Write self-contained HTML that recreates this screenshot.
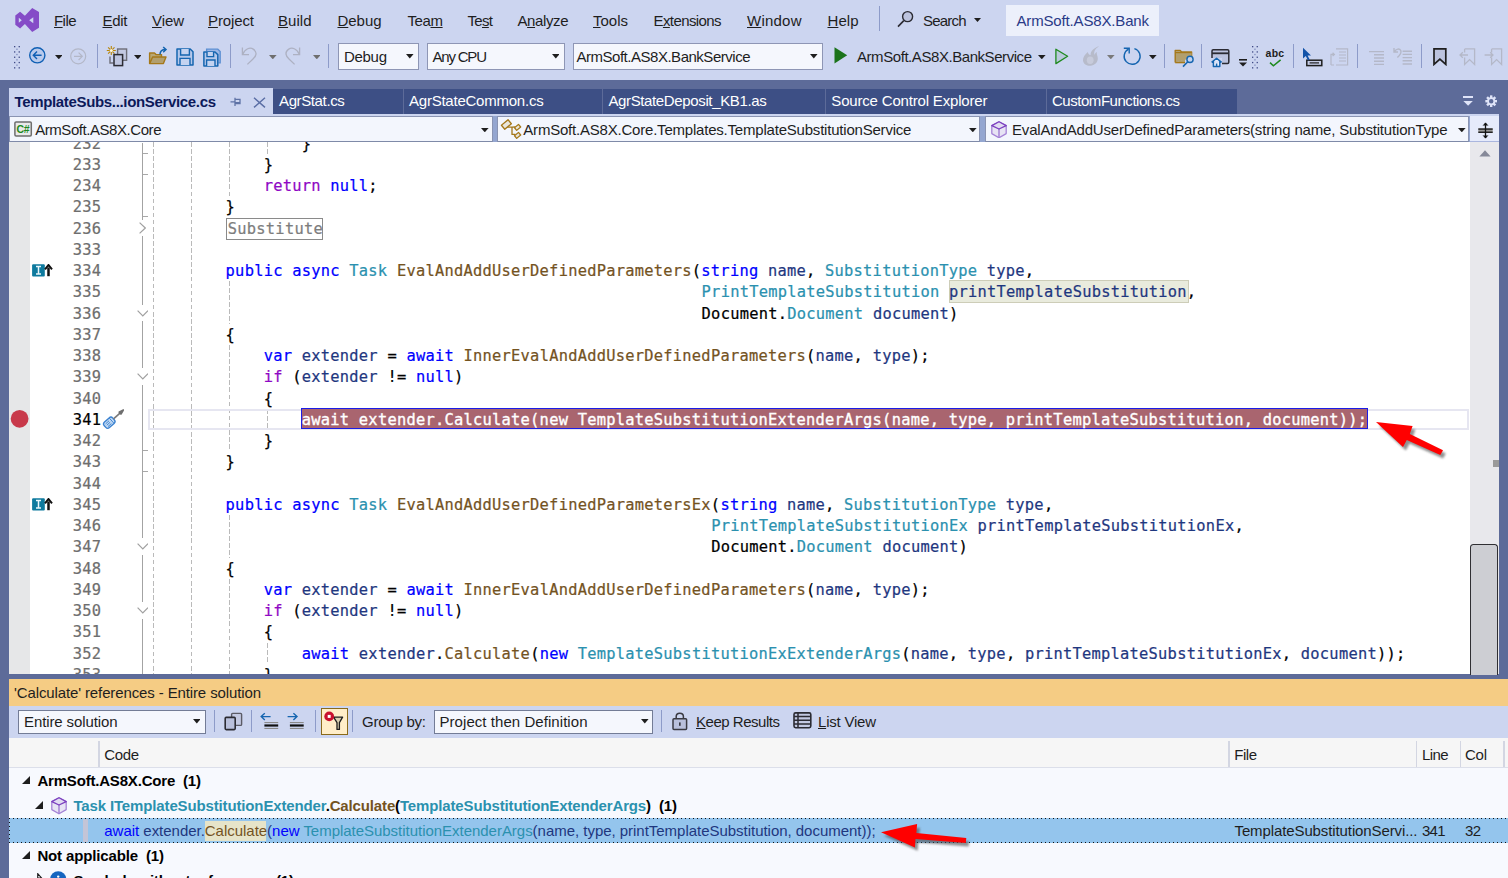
<!DOCTYPE html>
<html lang="en"><head><meta charset="utf-8"><title>Visual Studio</title>
<style>
html,body{margin:0;padding:0}
body{width:1508px;height:878px;overflow:hidden;background:#5d6b99;position:relative;font-family:"Liberation Sans", sans-serif}
body div,body svg{position:absolute}
.t{white-space:pre;line-height:20px;height:20px}
.t u{text-decoration-thickness:1px;text-underline-offset:0.7px}
.c{white-space:pre;font-family:"DejaVu Sans Mono", "Liberation Mono", monospace;font-size:15.4px;letter-spacing:0.248px;line-height:21px;height:21px;color:#000;-webkit-text-stroke:0.22px}
.c span{position:static}
.k{color:#0000ff}.ty{color:#2b91af}.m{color:#74531f}.p{color:#1f377f}.ck{color:#8f08c4}
.ln{color:#6e6e6e;text-align:right}
</style></head>
<body>
<div style="left:0px;top:0px;width:1508px;height:80px;background:#ccd5f0;"></div>
<div class="t" style="left:54px;top:10.70px;font-size:15px;font-weight:400;color:#1e1e1e;letter-spacing:-0.557px"><u>F</u>ile</div>
<div class="t" style="left:102.5px;top:10.70px;font-size:15px;font-weight:400;color:#1e1e1e;letter-spacing:-0.286px"><u>E</u>dit</div>
<div class="t" style="left:152px;top:10.70px;font-size:15px;font-weight:400;color:#1e1e1e;letter-spacing:-0.083px"><u>V</u>iew</div>
<div class="t" style="left:208px;top:10.70px;font-size:15px;font-weight:400;color:#1e1e1e;letter-spacing:-0.115px"><u>P</u>roject</div>
<div class="t" style="left:278px;top:10.70px;font-size:15px;font-weight:400;color:#1e1e1e;letter-spacing:0.035px"><u>B</u>uild</div>
<div class="t" style="left:337.5px;top:10.70px;font-size:15px;font-weight:400;color:#1e1e1e;letter-spacing:-0.051px"><u>D</u>ebug</div>
<div class="t" style="left:407.5px;top:10.70px;font-size:15px;font-weight:400;color:#1e1e1e;letter-spacing:-0.396px">Tea<u>m</u></div>
<div class="t" style="left:467.5px;top:10.70px;font-size:15px;font-weight:400;color:#1e1e1e;letter-spacing:-0.672px">Te<u>s</u>t</div>
<div class="t" style="left:517.5px;top:10.70px;font-size:15px;font-weight:400;color:#1e1e1e;letter-spacing:-0.396px">A<u>n</u>alyze</div>
<div class="t" style="left:593px;top:10.70px;font-size:15px;font-weight:400;color:#1e1e1e;letter-spacing:-0.008px"><u>T</u>ools</div>
<div class="t" style="left:653.5px;top:10.70px;font-size:15px;font-weight:400;color:#1e1e1e;letter-spacing:-0.597px">E<u>x</u>tensions</div>
<div class="t" style="left:747px;top:10.70px;font-size:15px;font-weight:400;color:#1e1e1e;letter-spacing:0.228px"><u>W</u>indow</div>
<div class="t" style="left:827.5px;top:10.70px;font-size:15px;font-weight:400;color:#1e1e1e;letter-spacing:0.047px"><u>H</u>elp</div>
<div style="left:879px;top:6px;width:1.2px;height:25px;background:#8d9bc9;"></div>
<div class="t" style="left:923px;top:10.70px;font-size:15px;font-weight:400;color:#1e1e1e;letter-spacing:-0.806px">Search</div>
<div style="left:1006px;top:5px;width:153px;height:31px;background:#ecf0fb;"></div>
<div class="t" style="left:1016.5px;top:11.20px;font-size:15px;font-weight:400;color:#2a3a87;letter-spacing:-0.16px">ArmSoft.AS8X.Bank</div>
<div style="left:338px;top:43px;width:79px;height:25px;background:#f5f7fd;border:1px solid #8e96b5"></div>
<div class="t" style="left:344px;top:46.50px;font-size:15px;font-weight:400;color:#1e1e1e;letter-spacing:-0.301px">Debug</div>
<svg style="left:406px;top:54.2px;" width="7.6" height="4.4" viewBox="0 0 7.6 4.4"><path d="M0 0H7.6L3.8 4.4Z" fill="#1e1e1e"/></svg>
<div style="left:427px;top:43px;width:136px;height:25px;background:#f5f7fd;border:1px solid #8e96b5"></div>
<div class="t" style="left:432.5px;top:46.50px;font-size:15px;font-weight:400;color:#1e1e1e;letter-spacing:-1.198px">Any CPU</div>
<svg style="left:551.5px;top:54.2px;" width="7.6" height="4.4" viewBox="0 0 7.6 4.4"><path d="M0 0H7.6L3.8 4.4Z" fill="#1e1e1e"/></svg>
<div style="left:573px;top:43px;width:248px;height:25px;background:#f5f7fd;border:1px solid #8e96b5"></div>
<div class="t" style="left:576.5px;top:46.50px;font-size:15px;font-weight:400;color:#1e1e1e;letter-spacing:-0.482px">ArmSoft.AS8X.BankService</div>
<svg style="left:810px;top:54.2px;" width="7.6" height="4.4" viewBox="0 0 7.6 4.4"><path d="M0 0H7.6L3.8 4.4Z" fill="#1e1e1e"/></svg>
<div class="t" style="left:857px;top:46.50px;font-size:15px;font-weight:400;color:#1e1e1e;letter-spacing:-0.438px">ArmSoft.AS8X.BankService</div>
<div style="left:9px;top:88px;width:264.1px;height:28px;background:#ccd5f0;"></div>
<div class="t" style="left:14.5px;top:91.80px;font-size:15px;font-weight:700;color:#0c1a5a;letter-spacing:-0.339px">TemplateSubs...ionService.cs</div>
<div style="left:273px;top:89px;width:129.5px;height:24.8px;background:#3d4f85;"></div>
<div class="t" style="left:279px;top:91.40px;font-size:15px;font-weight:400;color:#ffffff;letter-spacing:-0.378px">AgrStat.cs</div>
<div style="left:404px;top:89px;width:197.5px;height:24.8px;background:#3d4f85;"></div>
<div class="t" style="left:409px;top:91.40px;font-size:15px;font-weight:400;color:#ffffff;letter-spacing:-0.231px">AgrStateCommon.cs</div>
<div style="left:603px;top:89px;width:221.5px;height:24.8px;background:#3d4f85;"></div>
<div class="t" style="left:608.4px;top:91.40px;font-size:15px;font-weight:400;color:#ffffff;letter-spacing:-0.364px">AgrStateDeposit_KB1.as</div>
<div style="left:826px;top:89px;width:219.5px;height:24.8px;background:#3d4f85;"></div>
<div class="t" style="left:831.3px;top:91.40px;font-size:15px;font-weight:400;color:#ffffff;letter-spacing:-0.176px">Source Control Explorer</div>
<div style="left:1047px;top:89px;width:190px;height:24.8px;background:#3d4f85;"></div>
<div class="t" style="left:1052px;top:91.40px;font-size:15px;font-weight:400;color:#ffffff;letter-spacing:-0.464px">CustomFunctions.cs</div>
<div style="left:9px;top:113.8px;width:1490px;height:2.8px;background:#ccd5f0;"></div>
<div style="left:9px;top:116.4px;width:1490px;height:26px;background:#94a6d0;"></div>
<div style="left:9.3px;top:116.4px;width:481.3px;height:24px;background:#f3f6fd;border:1px solid #8a94b2;border-bottom-color:#7f8aa8"></div>
<div class="t" style="left:35.2px;top:119.70px;font-size:15px;font-weight:400;color:#1e1e1e;letter-spacing:-0.443px">ArmSoft.AS8X.Core</div>
<svg style="left:481px;top:127.60000000000001px;" width="7.6" height="4.3" viewBox="0 0 7.6 4.3"><path d="M0 0H7.6L3.8 4.3Z" fill="#1e1e1e"/></svg>
<div style="left:497.4px;top:116.4px;width:481px;height:24px;background:#f3f6fd;border:1px solid #8a94b2;border-bottom-color:#7f8aa8"></div>
<div class="t" style="left:523.3px;top:119.70px;font-size:15px;font-weight:400;color:#1e1e1e;letter-spacing:-0.207px">ArmSoft.AS8X.Core.Templates.TemplateSubstitutionService</div>
<svg style="left:969.2px;top:127.60000000000001px;" width="7.6" height="4.3" viewBox="0 0 7.6 4.3"><path d="M0 0H7.6L3.8 4.3Z" fill="#1e1e1e"/></svg>
<div style="left:985.2px;top:116.4px;width:482.3px;height:24px;background:#f3f6fd;border:1px solid #8a94b2;border-bottom-color:#7f8aa8"></div>
<div class="t" style="left:1012px;top:119.70px;font-size:15px;font-weight:400;color:#1e1e1e;letter-spacing:-0.176px">EvalAndAddUserDefinedParameters(string name, SubstitutionType</div>
<svg style="left:1458px;top:127.60000000000001px;" width="7.6" height="4.3" viewBox="0 0 7.6 4.3"><path d="M0 0H7.6L3.8 4.3Z" fill="#1e1e1e"/></svg>
<div style="left:1469.5px;top:116.4px;width:29.5px;height:25.6px;background:#e6ebfb;border-bottom:1px solid #aab6de;box-sizing:content-box;height:25px"></div>
<div style="left:9px;top:142px;width:1490px;height:532px;background:#ffffff;"></div>
<div style="left:9px;top:142px;width:21px;height:532px;background:#e6e7e8;"></div>
<div style="left:1470px;top:142px;width:29px;height:532px;background:#e8e8ec;"></div>
<div style="left:1470px;top:543.5px;width:26px;height:130.5px;background:#cdced3;border:1.5px solid #2f2f33;border-bottom:none;border-radius:3.5px 3.5px 0 0"></div>
<div style="left:1493px;top:460px;width:6px;height:7px;background:#9a9a9a;"></div>
<svg style="left:1478.6px;top:149.8px;" width="12" height="7" viewBox="0 0 12 7"><path d="M6 0.3L11.6 6.4H0.4Z" fill="#868999"/></svg>
<div style="left:141.5px;top:142.5px;width:1.5px;height:77.19999999999999px;background:#a3a3a3;"></div>
<svg style="left:138.6px;top:222.0px;" width="7.4" height="12" viewBox="0 0 7.4 12"><path d="M0.6 0.6L6.3 6L0.6 11.4" fill="none" stroke="#a0a0a0" stroke-width="1.2"/></svg>
<div style="left:141.5px;top:236.1px;width:1.5px;height:68.6px;background:#a3a3a3;"></div>
<svg style="left:136.6px;top:309.6px;" width="11.6" height="7" viewBox="0 0 11.6 7"><path d="M0.6 0.6L5.8 5.9L11 0.6" fill="none" stroke="#a0a0a0" stroke-width="1.2"/></svg>
<div style="left:141.5px;top:321.1px;width:1.5px;height:47.349999999999966px;background:#a3a3a3;"></div>
<svg style="left:136.6px;top:373.35px;" width="11.6" height="7" viewBox="0 0 11.6 7"><path d="M0.6 0.6L5.8 5.9L11 0.6" fill="none" stroke="#a0a0a0" stroke-width="1.2"/></svg>
<div style="left:141.5px;top:384.85px;width:1.5px;height:153.60000000000002px;background:#a3a3a3;"></div>
<svg style="left:136.6px;top:543.35px;" width="11.6" height="7" viewBox="0 0 11.6 7"><path d="M0.6 0.6L5.8 5.9L11 0.6" fill="none" stroke="#a0a0a0" stroke-width="1.2"/></svg>
<div style="left:141.5px;top:554.85px;width:1.5px;height:47.35000000000002px;background:#a3a3a3;"></div>
<svg style="left:136.6px;top:607.1px;" width="11.6" height="7" viewBox="0 0 11.6 7"><path d="M0.6 0.6L5.8 5.9L11 0.6" fill="none" stroke="#a0a0a0" stroke-width="1.2"/></svg>
<div style="left:141.5px;top:618.6px;width:1.5px;height:55.39999999999998px;background:#a3a3a3;"></div>
<div style="left:143px;top:152.65px;width:4.8px;height:1px;background:#a8a8a8;"></div>
<div style="left:143px;top:173.9px;width:4.8px;height:1px;background:#a8a8a8;"></div>
<div style="left:143px;top:216.4px;width:4.8px;height:1px;background:#a8a8a8;"></div>
<div style="left:143px;top:450.15px;width:4.8px;height:1px;background:#a8a8a8;"></div>
<div style="left:143px;top:471.4px;width:4.8px;height:1px;background:#a8a8a8;"></div>
<div style="left:9px;top:142px;width:1461px;height:532px;overflow:hidden">
<div style="left:143.8px;top:0.0px;width:1px;height:532.0px;background:repeating-linear-gradient(180deg,#bababa 0 4.6px,transparent 4.6px 7.08px)"></div>
<div style="left:181.8px;top:0.0px;width:1px;height:532.0px;background:repeating-linear-gradient(180deg,#bababa 0 4.6px,transparent 4.6px 7.08px)"></div>
<div style="left:219.9px;top:0.0px;width:1px;height:54.3px;background:repeating-linear-gradient(180deg,#bababa 0 4.6px,transparent 4.6px 7.08px)"></div>
<div style="left:258.0px;top:0.0px;width:1px;height:11.8px;background:repeating-linear-gradient(180deg,#bababa 0 4.6px,transparent 4.6px 7.08px)"></div>
<div style="left:219.9px;top:139.3px;width:1px;height:42.5px;background:repeating-linear-gradient(180deg,#bababa 0 4.6px,transparent 4.6px 7.08px)"></div>
<div style="left:219.9px;top:203.1px;width:1px;height:106.2px;background:repeating-linear-gradient(180deg,#bababa 0 4.6px,transparent 4.6px 7.08px)"></div>
<div style="left:258.0px;top:266.8px;width:1px;height:21.2px;background:repeating-linear-gradient(180deg,#bababa 0 4.6px,transparent 4.6px 7.08px)"></div>
<div style="left:219.9px;top:373.0px;width:1px;height:42.5px;background:repeating-linear-gradient(180deg,#bababa 0 4.6px,transparent 4.6px 7.08px)"></div>
<div style="left:219.9px;top:436.8px;width:1px;height:95.2px;background:repeating-linear-gradient(180deg,#bababa 0 4.6px,transparent 4.6px 7.08px)"></div>
<div style="left:258.0px;top:500.5px;width:1px;height:21.2px;background:repeating-linear-gradient(180deg,#bababa 0 4.6px,transparent 4.6px 7.08px)"></div>
<div style="left:139.2px;top:266.8px;width:1317px;height:16.8px;border:2px solid #e6e6f1"></div>
<div style="left:292px;top:266.1px;width:1064.9px;height:19.2px;background:#a9656f;border:1.5px solid #1c1ce6"></div>
<div style="left:940px;top:138px;width:238px;height:21px;background:#e9ebdd;border:1px solid #cdcdb8"></div>
<div style="left:217.3px;top:76.4px;width:94.5px;height:19.6px;border:1px solid #8a8a8a"></div>
<div class="c ln" style="left:51px;top:-8.00px;width:41.3px;color:#6e6e6e">232</div>
<div class="c" style="left:292.77px;top:-8.00px">}</div>
<div class="c ln" style="left:51px;top:13.00px;width:41.3px;color:#6e6e6e">233</div>
<div class="c" style="left:254.69px;top:13.00px">}</div>
<div class="c ln" style="left:51px;top:34.00px;width:41.3px;color:#6e6e6e">234</div>
<div class="c" style="left:254.69px;top:34.00px"><span class="ck">return</span> <span class="k">null</span>;</div>
<div class="c ln" style="left:51px;top:55.00px;width:41.3px;color:#6e6e6e">235</div>
<div class="c" style="left:216.61px;top:55.00px">}</div>
<div class="c ln" style="left:51px;top:77.00px;width:41.3px;color:#6e6e6e">236</div>
<div class="c" style="left:218.81px;top:77.00px;color:#7d7d7d">Substitute</div>
<div class="c ln" style="left:51px;top:98.00px;width:41.3px;color:#6e6e6e">333</div>
<div class="c ln" style="left:51px;top:119.00px;width:41.3px;color:#6e6e6e">334</div>
<div class="c" style="left:216.61px;top:119.00px"><span class="k">public</span> <span class="k">async</span> <span class="ty">Task</span> <span class="m">EvalAndAddUserDefinedParameters</span>(<span class="k">string</span> <span class="p">name</span>, <span class="ty">SubstitutionType</span> <span class="p">type</span>,</div>
<div class="c ln" style="left:51px;top:140.00px;width:41.3px;color:#6e6e6e">335</div>
<div class="c" style="left:692.61px;top:140.00px"><span class="ty">PrintTemplateSubstitution</span> <span class="p">printTemplateSubstitution</span>,</div>
<div class="c ln" style="left:51px;top:162.00px;width:41.3px;color:#6e6e6e">336</div>
<div class="c" style="left:692.61px;top:162.00px">Document.<span class="ty">Document</span> <span class="p">document</span>)</div>
<div class="c ln" style="left:51px;top:183.00px;width:41.3px;color:#6e6e6e">337</div>
<div class="c" style="left:216.61px;top:183.00px">{</div>
<div class="c ln" style="left:51px;top:204.00px;width:41.3px;color:#6e6e6e">338</div>
<div class="c" style="left:254.69px;top:204.00px"><span class="k">var</span> <span class="p">extender</span> = <span class="k">await</span> <span class="m">InnerEvalAndAddUserDefinedParameters</span>(<span class="p">name</span>, <span class="p">type</span>);</div>
<div class="c ln" style="left:51px;top:225.00px;width:41.3px;color:#6e6e6e">339</div>
<div class="c" style="left:254.69px;top:225.00px"><span class="ck">if</span> (<span class="p">extender</span> != <span class="k">null</span>)</div>
<div class="c ln" style="left:51px;top:247.00px;width:41.3px;color:#6e6e6e">340</div>
<div class="c" style="left:254.69px;top:247.00px">{</div>
<div class="c ln" style="left:51px;top:268.00px;width:41.3px;color:#000">341</div>
<div class="c" style="left:292.77px;top:268.00px;color:#fff;-webkit-text-stroke:0.35px #fff">await extender.Calculate(new TemplateSubstitutionExtenderArgs(name, type, printTemplateSubstitution, document));</div>
<div class="c ln" style="left:51px;top:289.00px;width:41.3px;color:#6e6e6e">342</div>
<div class="c" style="left:254.69px;top:289.00px">}</div>
<div class="c ln" style="left:51px;top:310.00px;width:41.3px;color:#6e6e6e">343</div>
<div class="c" style="left:216.61px;top:310.00px">}</div>
<div class="c ln" style="left:51px;top:332.00px;width:41.3px;color:#6e6e6e">344</div>
<div class="c ln" style="left:51px;top:353.00px;width:41.3px;color:#6e6e6e">345</div>
<div class="c" style="left:216.61px;top:353.00px"><span class="k">public</span> <span class="k">async</span> <span class="ty">Task</span> <span class="m">EvalAndAddUserDefinedParametersEx</span>(<span class="k">string</span> <span class="p">name</span>, <span class="ty">SubstitutionType</span> <span class="p">type</span>,</div>
<div class="c ln" style="left:51px;top:374.00px;width:41.3px;color:#6e6e6e">346</div>
<div class="c" style="left:702.13px;top:374.00px"><span class="ty">PrintTemplateSubstitutionEx</span> <span class="p">printTemplateSubstitutionEx</span>,</div>
<div class="c ln" style="left:51px;top:395.00px;width:41.3px;color:#6e6e6e">347</div>
<div class="c" style="left:702.13px;top:395.00px">Document.<span class="ty">Document</span> <span class="p">document</span>)</div>
<div class="c ln" style="left:51px;top:417.00px;width:41.3px;color:#6e6e6e">348</div>
<div class="c" style="left:216.61px;top:417.00px">{</div>
<div class="c ln" style="left:51px;top:438.00px;width:41.3px;color:#6e6e6e">349</div>
<div class="c" style="left:254.69px;top:438.00px"><span class="k">var</span> <span class="p">extender</span> = <span class="k">await</span> <span class="m">InnerEvalAndAddUserDefinedParameters</span>(<span class="p">name</span>, <span class="p">type</span>);</div>
<div class="c ln" style="left:51px;top:459.00px;width:41.3px;color:#6e6e6e">350</div>
<div class="c" style="left:254.69px;top:459.00px"><span class="ck">if</span> (<span class="p">extender</span> != <span class="k">null</span>)</div>
<div class="c ln" style="left:51px;top:480.00px;width:41.3px;color:#6e6e6e">351</div>
<div class="c" style="left:254.69px;top:480.00px">{</div>
<div class="c ln" style="left:51px;top:502.00px;width:41.3px;color:#6e6e6e">352</div>
<div class="c" style="left:292.77px;top:502.00px"><span class="k">await</span> <span class="p">extender</span>.<span class="m">Calculate</span>(<span class="k">new</span> <span class="ty">TemplateSubstitutionExExtenderArgs</span>(<span class="p">name</span>, <span class="p">type</span>, <span class="p">printTemplateSubstitutionEx</span>, <span class="p">document</span>));</div>
<div class="c ln" style="left:51px;top:523.00px;width:41.3px;color:#6e6e6e">353</div>
<div class="c" style="left:254.69px;top:523.00px">}</div>
</div>
<div style="left:9px;top:679px;width:1499px;height:27px;background:#f5cc84;"></div>
<div class="t" style="left:14px;top:682.50px;font-size:15px;font-weight:400;color:#1e1e1e;letter-spacing:-0.12px">&#x27;Calculate&#x27; references - Entire solution</div>
<div style="left:9px;top:706px;width:1499px;height:32px;background:#ccd5f0;"></div>
<div style="left:18px;top:709.5px;width:186px;height:22.2px;background:#f5f7fd;border:1px solid #737c96"></div>
<div class="t" style="left:24px;top:711.60px;font-size:15px;font-weight:400;color:#1e1e1e;letter-spacing:-0.104px">Entire solution</div>
<svg style="left:192.5px;top:719.3px;" width="7.6" height="4.4" viewBox="0 0 7.6 4.4"><path d="M0 0H7.6L3.8 4.4Z" fill="#1e1e1e"/></svg>
<div style="left:213.9px;top:709.9px;width:1.2px;height:21.8px;background:#8d9bc9;"></div>
<div style="left:250.9px;top:709.9px;width:1.2px;height:21.8px;background:#8d9bc9;"></div>
<div style="left:315.0px;top:709.9px;width:1.2px;height:21.8px;background:#8d9bc9;"></div>
<div style="left:351.9px;top:709.9px;width:1.2px;height:21.8px;background:#8d9bc9;"></div>
<div style="left:660.9px;top:709.9px;width:1.2px;height:21.8px;background:#8d9bc9;"></div>
<div style="left:321.2px;top:708.1px;width:24.5px;height:24.5px;background:#ffeec9;border:1px solid #8a6a1a"></div>
<div class="t" style="left:362px;top:711.60px;font-size:15px;font-weight:400;color:#1e1e1e;letter-spacing:-0.234px">Group by:</div>
<div style="left:434px;top:709.5px;width:216.8px;height:22.2px;background:#f5f7fd;border:1px solid #737c96"></div>
<div class="t" style="left:439.5px;top:711.60px;font-size:15px;font-weight:400;color:#1e1e1e;letter-spacing:0.057px">Project then Definition</div>
<svg style="left:641px;top:719.3px;" width="7.6" height="4.4" viewBox="0 0 7.6 4.4"><path d="M0 0H7.6L3.8 4.4Z" fill="#1e1e1e"/></svg>
<div class="t" style="left:696px;top:711.60px;font-size:15px;font-weight:400;color:#1e1e1e;letter-spacing:-0.474px"><u>K</u>eep Results</div>
<div class="t" style="left:818px;top:711.60px;font-size:15px;font-weight:400;color:#1e1e1e;letter-spacing:-0.221px"><u>L</u>ist View</div>
<div style="left:9px;top:737.7px;width:1499px;height:30.3px;background:#f6f6f6;"></div>
<div style="left:9px;top:767.2px;width:1499px;height:1px;background:#dcdfea;"></div>
<div style="left:98.1px;top:741.3px;width:1.8px;height:25.6px;background:#d3d6e2;"></div>
<div style="left:1228.1px;top:741.3px;width:1.8px;height:25.6px;background:#d3d6e2;"></div>
<div style="left:1415.6px;top:741.3px;width:1.8px;height:25.6px;background:#d3d6e2;"></div>
<div style="left:1459.6px;top:741.3px;width:1.8px;height:25.6px;background:#d3d6e2;"></div>
<div style="left:1503.1px;top:741.3px;width:1.8px;height:25.6px;background:#d3d6e2;"></div>
<div class="t" style="left:104.3px;top:744.80px;font-size:15px;font-weight:400;color:#1e1e1e;letter-spacing:-0.386px">Code</div>
<div class="t" style="left:1234.3px;top:744.80px;font-size:15px;font-weight:400;color:#1e1e1e;letter-spacing:-0.491px">File</div>
<div class="t" style="left:1422px;top:744.80px;font-size:15px;font-weight:400;color:#1e1e1e;letter-spacing:-0.62px">Line</div>
<div class="t" style="left:1465px;top:744.80px;font-size:15px;font-weight:400;color:#1e1e1e;letter-spacing:-0.258px">Col</div>
<div style="left:9px;top:768px;width:1499px;height:110px;background:#f7f9fe;"></div>
<svg style="left:22px;top:776.3px;" width="8.2" height="8.2" viewBox="0 0 8.2 8.2"><path d="M8 0V8H0Z" fill="#1e1e1e"/></svg>
<div class="t" style="left:37.4px;top:770.70px;font-size:15px;font-weight:700;color:#000;letter-spacing:-0.187px">ArmSoft.AS8X.Core  (1)</div>
<svg style="left:35.2px;top:801.2px;" width="8.2" height="8.2" viewBox="0 0 8.2 8.2"><path d="M8 0V8H0Z" fill="#1e1e1e"/></svg>
<div class="t" style="left:73.4px;top:795.70px;font-size:15px;font-weight:700;color:#000;letter-spacing:-0.14px"><span style="color:#2b91af">Task ITemplateSubstitutionExtender</span><span style="color:#000">.</span><span style="color:#74531f">Calculate</span><span style="color:#000">(</span><span style="color:#2b91af">TemplateSubstitutionExtenderArgs</span><span style="color:#000">)  (1)</span></div>
<div style="left:9px;top:818px;width:1499px;height:25px;background:#94c5ed;"></div>
<div style="left:9px;top:818px;width:1499px;height:1.3px;background:none;background:repeating-linear-gradient(90deg,#111 0 1.5px,transparent 1.5px 4px)"></div>
<div style="left:9px;top:841.6px;width:1499px;height:1.3px;background:none;background:repeating-linear-gradient(90deg,#111 0 1.5px,transparent 1.5px 4px)"></div>
<div style="left:9px;top:818px;width:1.2px;height:25px;background:none;background:repeating-linear-gradient(180deg,#111 0 1.5px,transparent 1.5px 4px)"></div>
<div style="left:83.2px;top:819.3px;width:4.5px;height:22.3px;background:#c3c5d7;"></div>
<div style="left:204.5px;top:821px;width:61.5px;height:20px;background:#e6e4c9;"></div>
<div class="t" style="left:104.3px;top:820.90px;font-size:15px;font-weight:400;color:#000;letter-spacing:-0.028px"><span style="color:#0000ff">await</span><span style="color:#1f377f"> extender.</span><span style="color:#74531f">Calculate</span><span style="color:#1f377f">(</span><span style="color:#0000ff">new</span><span style="color:#000"> </span><span style="color:#2b91af">TemplateSubstitutionExtenderArgs</span><span style="color:#1f377f">(name, type, printTemplateSubstitution, document));</span></div>
<div class="t" style="left:1234.5px;top:820.90px;font-size:15px;font-weight:400;color:#1e1e1e;letter-spacing:-0.109px">TemplateSubstitutionServi...</div>
<div class="t" style="left:1422px;top:820.90px;font-size:15px;font-weight:400;color:#1e1e1e;letter-spacing:-0.766px">341</div>
<div class="t" style="left:1465px;top:820.90px;font-size:15px;font-weight:400;color:#1e1e1e;letter-spacing:-0.688px">32</div>
<svg style="left:22px;top:851px;" width="8.2" height="8.2" viewBox="0 0 8.2 8.2"><path d="M8 0V8H0Z" fill="#1e1e1e"/></svg>
<div class="t" style="left:37.4px;top:845.90px;font-size:15px;font-weight:700;color:#000;letter-spacing:-0.144px">Not applicable  (1)</div>
<div class="t" style="left:73.4px;top:871.10px;font-size:15px;font-weight:700;color:#000;letter-spacing:-0.204px">Symbols without references  (1)</div>
<svg style="left:14.8px;top:8px;" width="24.5" height="24" viewBox="0 0 24.5 24"><path fill-rule="evenodd" fill="#854cc7" d="M17.2 0L24.2 4.1V19.7L17.2 24L9.9 16.1L5.1 20.4L0.3 16.8V7.4L5.1 3.8L9.9 7.8ZM18.3 9.2L14.2 12.2L18.3 15.3ZM3.8 9.7V14.8L6.8 12.2Z"/></svg>
<svg style="left:13.9px;top:46px;" width="6" height="23" viewBox="0 0 6 23"><rect x="0" y="0.0" width="1.3" height="1.3" fill="#3f4a85"/><rect x="4.6" y="0.0" width="1.3" height="1.3" fill="#3f4a85"/><rect x="2.3" y="2.6" width="1.3" height="1.3" fill="#7f8bbd"/><rect x="0" y="5.3" width="1.3" height="1.3" fill="#3f4a85"/><rect x="4.6" y="5.3" width="1.3" height="1.3" fill="#3f4a85"/><rect x="2.3" y="7.9" width="1.3" height="1.3" fill="#7f8bbd"/><rect x="0" y="10.6" width="1.3" height="1.3" fill="#3f4a85"/><rect x="4.6" y="10.6" width="1.3" height="1.3" fill="#3f4a85"/><rect x="2.3" y="13.2" width="1.3" height="1.3" fill="#7f8bbd"/><rect x="0" y="15.9" width="1.3" height="1.3" fill="#3f4a85"/><rect x="4.6" y="15.9" width="1.3" height="1.3" fill="#3f4a85"/><rect x="2.3" y="18.5" width="1.3" height="1.3" fill="#7f8bbd"/><rect x="0" y="21.2" width="1.3" height="1.3" fill="#3f4a85"/><rect x="4.6" y="21.2" width="1.3" height="1.3" fill="#3f4a85"/></svg>
<svg style="left:28px;top:46px;" width="19" height="19" viewBox="0 0 19 19"><circle cx="9.3" cy="9.3" r="7.6" fill="#b9caec" stroke="#0f5fb4" stroke-width="1.4"/><path d="M13.6 9.3H5.6M9 5.6L5.3 9.3L9 13" fill="none" stroke="#0f5fb4" stroke-width="1.4"/></svg>
<svg style="left:54.9px;top:54.8px;" width="7.6" height="4.3" viewBox="0 0 7.6 4.3"><path d="M0 0H7.6L3.8 4.3Z" fill="#1e1e1e"/></svg>
<svg style="left:69px;top:47px;" width="19" height="19" viewBox="0 0 19 19"><circle cx="9.2" cy="9.3" r="7.5" fill="none" stroke="#b3b7c7" stroke-width="1.2"/><path d="M5 9.3H13M9.6 5.6L13.3 9.3L9.6 13" fill="none" stroke="#b3b7c7" stroke-width="1.2"/></svg>
<div style="left:96.9px;top:44px;width:1.2px;height:23.799999999999997px;background:#8d9bc9;"></div>
<svg style="left:106px;top:45px;" width="22" height="22" viewBox="0 0 22 22"><g stroke="#b8860b" stroke-width="1.1"><path d="M5.3 1V10M0.8 5.5H9.8M2.1 2.3L8.5 8.7M8.5 2.3L2.1 8.7"/></g><circle cx="5.3" cy="5.5" r="1.5" fill="#fff8e0"/><rect x="11.6" y="4" width="9" height="11.3" fill="#c3c9e2" stroke="#6e6e78" stroke-width="1.4"/><path d="M4 11.5V18H7.5" fill="none" stroke="#6e6e78" stroke-width="1.4"/><rect x="8" y="9.6" width="8.6" height="11" fill="#bfc6e0" stroke="#2b2b33" stroke-width="1.5"/></svg>
<svg style="left:133.8px;top:55px;" width="7.6" height="4.3" viewBox="0 0 7.6 4.3"><path d="M0 0H7.6L3.8 4.3Z" fill="#1e1e1e"/></svg>
<svg style="left:148px;top:46px;" width="20" height="20" viewBox="0 0 20 20"><path d="M1.6 17.6V7H6.5L8 8.6H13.5V11" fill="#b9a774" stroke="#a5781a" stroke-width="1.4" stroke-linejoin="round"/><path d="M1.6 17.6L4.6 11H18L15.4 17.6Z" fill="#b29f6e" stroke="#a5781a" stroke-width="1.4" stroke-linejoin="round"/><path d="M12 8.6C12 5.5 14 3.6 17.6 3.6M15.2 1L18 3.6L15.2 6.2" fill="none" stroke="#1565b0" stroke-width="1.5"/></svg>
<svg style="left:176px;top:48px;" width="18" height="18" viewBox="0 0 18 18"><path d="M1 1H14.2L17 3.8V17H1Z" fill="#b5c8eb" stroke="#1565b0" stroke-width="1.5" stroke-linejoin="round"/><path d="M4.6 1V7H13.4V1M4 17V10.4H14V17" fill="#c4d3f0" stroke="#1565b0" stroke-width="1.4"/></svg>
<svg style="left:203px;top:47.5px;" width="19" height="19" viewBox="0 0 19 19"><path d="M3.6 3.2V1.2H14.8L17.2 3.6V14.8H15.4" fill="#9db7e6" stroke="#5b8fd2" stroke-width="1.3"/><path d="M0.9 4H12L14.8 6.6V18H0.9Z" fill="#b5c8eb" stroke="#1565b0" stroke-width="1.5" stroke-linejoin="round"/><path d="M4 4V8.6H10.6V4M3.6 18V12H12V18" fill="#c4d3f0" stroke="#1565b0" stroke-width="1.4"/></svg>
<div style="left:230.0px;top:44px;width:1.2px;height:23.799999999999997px;background:#8d9bc9;"></div>
<svg style="left:240.5px;top:46px;" width="17" height="19" viewBox="0 0 17 19"><path d="M1.4 1.6V8.6H8M1.8 8.2C4 2.6 9 0.8 12.6 3.4C16.4 6.2 15.4 10 12 13L6.4 18.4" fill="none" stroke="#adb1c2" stroke-width="1.3"/></svg>
<svg style="left:269.3px;top:54.9px;" width="7.6" height="4.3" viewBox="0 0 7.6 4.3"><path d="M0 0H7.6L3.8 4.3Z" fill="#6e6e6e"/></svg>
<svg style="left:284.2px;top:46px;" width="17" height="19" viewBox="0 0 17 19"><g transform="translate(17,0) scale(-1,1)"><path d="M1.4 1.6V8.6H8M1.8 8.2C4 2.6 9 0.8 12.6 3.4C16.4 6.2 15.4 10 12 13L6.4 18.4" fill="none" stroke="#adb1c2" stroke-width="1.3"/></g></svg>
<svg style="left:312.9px;top:54.9px;" width="7.6" height="4.3" viewBox="0 0 7.6 4.3"><path d="M0 0H7.6L3.8 4.3Z" fill="#6e6e6e"/></svg>
<div style="left:327.79999999999995px;top:44px;width:1.2px;height:23.799999999999997px;background:#8d9bc9;"></div>
<svg style="left:834px;top:47px;" width="14" height="17" viewBox="0 0 14 17"><path d="M0.5 0.3L13.2 8.3L0.5 16.5Z" fill="#1b731b"/></svg>
<svg style="left:1038.1px;top:54.8px;" width="7.6" height="4.3" viewBox="0 0 7.6 4.3"><path d="M0 0H7.6L3.8 4.3Z" fill="#1e1e1e"/></svg>
<svg style="left:1055px;top:48px;" width="14" height="17" viewBox="0 0 14 17"><path d="M0.9 1.2L12.6 8.3L0.9 15.6Z" fill="#b9c9dc" stroke="#1e8a1e" stroke-width="1.3" stroke-linejoin="round"/></svg>
<svg style="left:1082px;top:46px;" width="18.5" height="20" viewBox="0 0 18.5 20"><path d="M17.2 0.2C12 1.6 8.2 5.2 8.6 9.2C7 8.8 6 7.6 5.8 6C2.8 8.4 0.8 11.4 1 14.4C1.4 18 4.6 19.8 8.4 19.7C12.6 19.6 15.8 16.6 15.8 12.6C15.8 10 14.4 8.6 14.8 6C13.6 6.6 12.8 7.8 12.6 9C11.4 5.8 13.2 2.4 17.2 0.2Z" fill="#b7bbca"/><ellipse cx="8.2" cy="14.2" rx="3.4" ry="3.7" fill="#c7cbdb"/></svg>
<svg style="left:1107.2px;top:54.8px;" width="7.6" height="4.3" viewBox="0 0 7.6 4.3"><path d="M0 0H7.6L3.8 4.3Z" fill="#7a7a7a"/></svg>
<svg style="left:1122px;top:46px;" width="20" height="20" viewBox="0 0 20 20"><path d="M6.6 3.1A8 8 0 1 0 12.4 2.6" fill="none" stroke="#1565b0" stroke-width="1.4"/><path d="M1.8 2.2H7.2V7.4" fill="none" stroke="#1565b0" stroke-width="1.4"/></svg>
<svg style="left:1149px;top:54.8px;" width="7.6" height="4.3" viewBox="0 0 7.6 4.3"><path d="M0 0H7.6L3.8 4.3Z" fill="#1e1e1e"/></svg>
<div style="left:1163.8000000000002px;top:44px;width:1.2px;height:23.799999999999997px;background:#8d9bc9;"></div>
<svg style="left:1173.5px;top:49px;" width="20" height="19" viewBox="0 0 20 19"><path d="M1.2 13.6V1.4H6.2L7.6 3H17.6V9" fill="#b29f6e" stroke="#a5781a" stroke-width="1.4" stroke-linejoin="round"/><path d="M1.2 13.6H11V3.4H17.6V8" fill="#b29f6e" stroke="none"/><path d="M1.2 13.6H11" stroke="#a5781a" stroke-width="1.4"/><path d="M1.4 3.6H17.6" stroke="#a5781a" stroke-width="1.2"/><circle cx="16" cy="10.4" r="3.1" fill="#c3d3f0" stroke="#1565b0" stroke-width="1.4"/><path d="M13.8 12.8L9 17.6" stroke="#1565b0" stroke-width="1.6"/></svg>
<div style="left:1200.8000000000002px;top:44px;width:1.2px;height:23.799999999999997px;background:#8d9bc9;"></div>
<svg style="left:1210.5px;top:49px;" width="20" height="19" viewBox="0 0 20 19"><rect x="1" y="0.8" width="16.8" height="13.6" rx="1.2" fill="#bcc3de" stroke="#2b2b33" stroke-width="1.5"/><rect x="1" y="3.4" width="16.8" height="1.8" fill="#2b2b33"/><rect x="0" y="9" width="11" height="10" fill="#ccd5f0"/><path d="M0.6 13.4L5.6 9.2L10.6 13.4M2.4 12.6V17.4H8.8V12.6M5.6 17.4V14.4" fill="#e8eefb" stroke="#1565b0" stroke-width="1.5" stroke-linejoin="round"/></svg>
<svg style="left:1239px;top:59.4px;" width="8" height="8" viewBox="0 0 8 8"><rect x="0" y="0" width="8" height="1.6" fill="#1e1e1e"/><path d="M0 3.6H8L4 7.6Z" fill="#1e1e1e"/></svg>
<svg style="left:1252px;top:46.2px;" width="6" height="23" viewBox="0 0 6 23"><rect x="0" y="0.0" width="1.3" height="1.3" fill="#3f4a85"/><rect x="4.6" y="0.0" width="1.3" height="1.3" fill="#3f4a85"/><rect x="2.3" y="2.6" width="1.3" height="1.3" fill="#7f8bbd"/><rect x="0" y="5.3" width="1.3" height="1.3" fill="#3f4a85"/><rect x="4.6" y="5.3" width="1.3" height="1.3" fill="#3f4a85"/><rect x="2.3" y="7.9" width="1.3" height="1.3" fill="#7f8bbd"/><rect x="0" y="10.6" width="1.3" height="1.3" fill="#3f4a85"/><rect x="4.6" y="10.6" width="1.3" height="1.3" fill="#3f4a85"/><rect x="2.3" y="13.2" width="1.3" height="1.3" fill="#7f8bbd"/><rect x="0" y="15.9" width="1.3" height="1.3" fill="#3f4a85"/><rect x="4.6" y="15.9" width="1.3" height="1.3" fill="#3f4a85"/><rect x="2.3" y="18.5" width="1.3" height="1.3" fill="#7f8bbd"/><rect x="0" y="21.2" width="1.3" height="1.3" fill="#3f4a85"/><rect x="4.6" y="21.2" width="1.3" height="1.3" fill="#3f4a85"/></svg>
<div style="left:1265.5px;top:47.2px;font:700 10.5px/12px 'Liberation Sans',sans-serif;color:#1e1e1e;letter-spacing:0.3px">abc</div>
<svg style="left:1269px;top:58.5px;" width="13" height="8" viewBox="0 0 13 8"><path d="M1 3.6L4.4 6.8L11.6 0.8" fill="none" stroke="#1e8a1e" stroke-width="1.5"/></svg>
<div style="left:1292.8000000000002px;top:44px;width:1.2px;height:23.799999999999997px;background:#8d9bc9;"></div>
<svg style="left:1302px;top:46.5px;" width="21" height="20" viewBox="0 0 21 20"><rect x="4.8" y="13.2" width="15" height="5.4" fill="#c4cbe4" stroke="#1e1e1e" stroke-width="1.5"/><path d="M7.6 15.9H17" stroke="#1e1e1e" stroke-width="1.2"/><path d="M1 0.8V11.6L3.8 9L6 13.6L7.8 12.8L5.6 8.4H9Z" fill="#1252a8"/></svg>
<svg style="left:1330px;top:47.5px;" width="19" height="18" viewBox="0 0 19 18"><g fill="none" stroke="#b4b8c8" stroke-width="1.2"><path d="M6 0.8H17.6V17H6M1 17V6.4H4M2.6 4.8L4.4 6.4L2.6 8M1 17H4"/><path d="M9 4H16M9 7H16M9 10H16M9 13H16"/></g></svg>
<div style="left:1356.9px;top:44px;width:1.2px;height:23.799999999999997px;background:#8d9bc9;"></div>
<svg style="left:1367.5px;top:49.5px;" width="17" height="16" viewBox="0 0 17 16"><g stroke="#b4b8c8" stroke-width="1.4"><path d="M1 1.6H16M6 4.8H16M6 8H16M6 11.2H16M6 14.4H16"/></g></svg>
<svg style="left:1392.5px;top:47px;" width="20" height="19" viewBox="0 0 20 19"><g stroke="#b4b8c8" stroke-width="1.4" fill="none"><path d="M9.6 4.2H19M9.6 7.4H19M9.6 10.6H19M9.6 13.8H19M9.6 17H19"/><path d="M1 1V5H5M1.4 4.6C3 1.6 6.6 1.2 7.8 3.6C8.8 5.8 7 8 4.4 10.6"/></g></svg>
<div style="left:1420.9px;top:44px;width:1.2px;height:23.799999999999997px;background:#8d9bc9;"></div>
<svg style="left:1433px;top:48px;" width="14" height="18" viewBox="0 0 14 18"><path d="M1 0.9H12.8V16.4L6.9 11.2L1 16.4Z" fill="#bcc3de" stroke="#1e1e1e" stroke-width="1.7" stroke-linejoin="miter"/></svg>
<svg style="left:1458.5px;top:48px;" width="17" height="18" viewBox="0 0 17 18"><path d="M5.6 0.9H15.6V16.4L10.6 11.6L5.6 16.4V9.6M5.6 4.4V0.9" fill="none" stroke="#b4b8c8" stroke-width="1.3"/><path d="M9 7H1M3.8 4.2L1 7L3.8 9.8" fill="none" stroke="#b4b8c8" stroke-width="1.3"/></svg>
<svg style="left:1483.5px;top:48px;" width="19" height="18" viewBox="0 0 19 18"><path d="M7.6 0.9H17.6V16.4L12.6 11.6L7.6 16.4V9.6M7.6 4.4V0.9" fill="none" stroke="#b4b8c8" stroke-width="1.3"/><path d="M0.6 7H9M6.2 4.2L9 7L6.2 9.8" fill="none" stroke="#b4b8c8" stroke-width="1.3"/></svg>
<svg style="left:897.4px;top:10.2px;" width="18" height="18" viewBox="0 0 18 18"><circle cx="10.6" cy="6.6" r="5" fill="#bcc3de" stroke="#2b2b33" stroke-width="1.4"/><path d="M6.8 10.6L1 16.6" stroke="#2b2b33" stroke-width="1.6"/></svg>
<svg style="left:973.6px;top:17.5px;" width="7" height="4" viewBox="0 0 7 4"><path d="M0 0H7L3.5 4Z" fill="#1e1e1e"/></svg>
<svg style="left:229.5px;top:96.5px;" width="11" height="10" viewBox="0 0 11 10"><path d="M0.5 4.9H5M5 0.8V9M5 2.4H10V6.6H5" fill="none" stroke="#5f73a6" stroke-width="1.3"/><path d="M5 6H10" stroke="#5f73a6" stroke-width="2"/></svg>
<svg style="left:252.5px;top:96.5px;" width="13" height="11" viewBox="0 0 13 11"><path d="M1 0.8L12 10.4M12 0.8L1 10.4" stroke="#5a6ea5" stroke-width="1.4"/></svg>
<svg style="left:1463px;top:96px;" width="10.4" height="10" viewBox="0 0 10.4 10"><rect x="0" y="0" width="10.2" height="2" fill="#dfe4f8"/><path d="M0.4 5H9.8L5.1 9.8Z" fill="#dfe4f8"/></svg>
<svg style="left:1484.8px;top:94.8px;" width="12.4" height="12.4" viewBox="0 0 12.4 12.4"><g transform="translate(6.2,6.2) scale(0.93)" fill="#dfe4f8"><rect x="-1.3" y="-6.3" width="2.6" height="3" transform="rotate(0)"/><rect x="-1.3" y="-6.3" width="2.6" height="3" transform="rotate(45)"/><rect x="-1.3" y="-6.3" width="2.6" height="3" transform="rotate(90)"/><rect x="-1.3" y="-6.3" width="2.6" height="3" transform="rotate(135)"/><rect x="-1.3" y="-6.3" width="2.6" height="3" transform="rotate(180)"/><rect x="-1.3" y="-6.3" width="2.6" height="3" transform="rotate(225)"/><rect x="-1.3" y="-6.3" width="2.6" height="3" transform="rotate(270)"/><rect x="-1.3" y="-6.3" width="2.6" height="3" transform="rotate(315)"/></g><circle cx="6.2" cy="6.2" r="3.1" fill="none" stroke="#dfe4f8" stroke-width="1.7"/></svg>
<svg style="left:14px;top:121px;" width="18.5" height="16" viewBox="0 0 18.5 16"><rect x="0.9" y="0.9" width="16.4" height="14" rx="1.2" fill="#e9e9ea" stroke="#6e6e6e" stroke-width="1.5"/></svg>
<div style="left:16.6px;top:123.1px;font:700 10.5px/13px 'Liberation Sans',sans-serif;color:#1e8a1e;letter-spacing:-0.4px">C#</div>
<svg style="left:500px;top:118px;" width="22" height="21" viewBox="0 0 22 21"><g fill="#e9e6dc" stroke="#a5781a" stroke-width="1.3" stroke-linejoin="round"><path d="M6.6 9.2H12V16.4H15.4M12 9.2L15.6 9" fill="none"/><rect x="-4.3" y="-2.6" width="8.6" height="5.2" transform="translate(6.4,6.5) rotate(-40)"/><rect x="-2.6" y="-1.7" width="5.2" height="3.4" transform="translate(17.6,9.4) rotate(-40)"/><rect x="-2.6" y="-1.7" width="5.2" height="3.4" transform="translate(17.6,17.4) rotate(-40)"/></g></svg>
<svg style="left:991px;top:120.5px;" width="16" height="17.6" viewBox="0 0 16 17.6"><path d="M8 0.8L15.2 4.6V12.6L8 16.8L0.8 12.6V4.6Z" fill="#e7e4f4" stroke="#a583d6" stroke-width="1.3" stroke-linejoin="round"/><path d="M8 16.8V8" stroke="#a583d6" stroke-width="1.5"/><path d="M0.8 4.6L8 0.8L15.2 4.6L8 8Z" fill="#e1dcf2" stroke="#7b3fbf" stroke-width="1.3" stroke-linejoin="round"/></svg>
<svg style="left:1477.5px;top:121.5px;" width="15" height="17" viewBox="0 0 15 17"><rect x="0.3" y="6.6" width="14.4" height="4" fill="#9a9a9a"/><rect x="0.3" y="6.4" width="14.4" height="1.3" fill="#111"/><rect x="0.3" y="9.6" width="14.4" height="1.3" fill="#111"/><path d="M7.5 1V16" stroke="#111" stroke-width="1.3"/><path d="M5 3.6L7.5 0.8L10 3.6M5 13.4L7.5 16.2L10 13.4" fill="#111" stroke="#111" stroke-width="0.5"/></svg>
<svg style="left:10px;top:409px;" width="20" height="20" viewBox="0 0 20 20"><circle cx="9.6" cy="9.8" r="8.9" fill="#c8394a"/></svg>
<svg style="left:102px;top:408px;" width="22" height="22" viewBox="0 0 22 22"><g transform="translate(7.2,14.8) rotate(-42)"><rect x="-5.6" y="-3.7" width="11.4" height="7.4" rx="2.6" fill="#c4dbf4" stroke="#3b82d0" stroke-width="1.4"/><path d="M3.2 -3.4V3.4M-3.4 -1.6H1.2M-3.4 0.2H1.2M-3.4 2H1.2" stroke="#3b82d0" stroke-width="0.9" fill="none"/><path d="M5.8 0H13" stroke="#7a7a7a" stroke-width="1.6"/><path d="M12.4 0L14.6 -2.2L19.8 -0.6V0.6L14.6 2.2Z" fill="#6e6e6e"/></g></svg>
<svg style="left:32px;top:264.2px;" width="21" height="13" viewBox="0 0 21 13"><rect x="0.1" y="0.2" width="12.7" height="12.2" rx="1" fill="#0e7a9e"/><path d="M4 2.6H9M4 10H9M6.5 2.6V10" stroke="#e9f6fb" stroke-width="1.5"/><path d="M16.5 12.2V3.4" stroke="#111" stroke-width="2.5"/><path d="M13 5.4L16.5 1L20 5.4" fill="none" stroke="#111" stroke-width="2"/></svg>
<svg style="left:32px;top:497.95px;" width="21" height="13" viewBox="0 0 21 13"><rect x="0.1" y="0.2" width="12.7" height="12.2" rx="1" fill="#0e7a9e"/><path d="M4 2.6H9M4 10H9M6.5 2.6V10" stroke="#e9f6fb" stroke-width="1.5"/><path d="M16.5 12.2V3.4" stroke="#111" stroke-width="2.5"/><path d="M13 5.4L16.5 1L20 5.4" fill="none" stroke="#111" stroke-width="2"/></svg>
<svg style="left:1372.4px;top:417.9px;" width="80.0" height="46.0" viewBox="0 0 80.0 46.0"><defs><filter id="sh1372" x="-20%" y="-20%" width="150%" height="150%"><feGaussianBlur stdDeviation="1.3"/></filter></defs><path d="M4.0 4.0L40.6 8.1L37.8 16.1L71.0 32.2L68.3 37.0L34.8 22.0L31.0 29.1Z" fill="#4a4a4a" opacity="0.6" filter="url(#sh1372)" transform="translate(2.8,3.4)"/><path d="M4.0 4.0L40.6 8.1L37.8 16.1L71.0 32.2L68.3 37.0L34.8 22.0L31.0 29.1Z" fill="#ff0000"/></svg>
<svg style="left:877.3px;top:820.2px;" width="98.3" height="36.4" viewBox="0 0 98.3 36.4"><defs><filter id="sh877" x="-20%" y="-20%" width="150%" height="150%"><feGaussianBlur stdDeviation="1.3"/></filter></defs><path d="M4.0 12.3L40.1 4.0L39.4 13.0L89.3 17.9L88.8 23.0L38.5 19.0L37.9 27.4Z" fill="#4a4a4a" opacity="0.6" filter="url(#sh877)" transform="translate(2.8,3.4)"/><path d="M4.0 12.3L40.1 4.0L39.4 13.0L89.3 17.9L88.8 23.0L38.5 19.0L37.9 27.4Z" fill="#ff0000"/></svg>
<svg style="left:223.5px;top:711.5px;" width="19" height="19" viewBox="0 0 19 19"><rect x="7.6" y="1.4" width="10" height="12" rx="1" fill="#c3c9e2" stroke="#5b5b66" stroke-width="1.4"/><rect x="1.2" y="5.4" width="10" height="12.2" rx="1" fill="#b9c0dc" stroke="#2b2b33" stroke-width="1.6"/></svg>
<svg style="left:259.5px;top:711px;" width="19" height="19" viewBox="0 0 19 19"><path d="M10.6 5.6H1.4M4.8 2.2L1.2 5.6L4.8 9" fill="none" stroke="#1565b0" stroke-width="1.4"/><rect x="4.4" y="11" width="13.8" height="1.1" fill="#8a8a8a"/><rect x="4.4" y="13.4" width="13.8" height="2.2" fill="#111"/><rect x="4.4" y="16.9" width="13.8" height="1.1" fill="#8a8a8a"/></svg>
<svg style="left:286.5px;top:711px;" width="19" height="19" viewBox="0 0 19 19"><path d="M0.6 5.6H9.8M6.4 2.2L10 5.6L6.4 9" fill="none" stroke="#1565b0" stroke-width="1.4"/><rect x="2.9" y="11" width="13.8" height="1.1" fill="#8a8a8a"/><rect x="2.9" y="13.4" width="13.8" height="2.2" fill="#111"/><rect x="2.9" y="16.9" width="13.8" height="1.1" fill="#8a8a8a"/></svg>
<svg style="left:323px;top:709.5px;" width="23" height="23" viewBox="0 0 23 23"><path d="M10.6 7.2H19.6L16.4 12.6V19.4H14V12.6Z" fill="#d9d0b0" stroke="#1e1e1e" stroke-width="1.3" stroke-linejoin="round"/><circle cx="6.2" cy="6.4" r="4.9" fill="#c8102e"/><rect x="4.7" y="4.9" width="3" height="3" fill="#fff"/></svg>
<svg style="left:671.5px;top:711.5px;" width="16" height="19" viewBox="0 0 16 19"><path d="M4.2 7V4.6C4.2 0 11.4 0 11.4 4.6V7" fill="none" stroke="#3a3a42" stroke-width="1.5"/><rect x="1" y="6.8" width="13.6" height="10.8" rx="1" fill="#b9c0dc" stroke="#3a3a42" stroke-width="1.5"/><rect x="7.1" y="10.4" width="1.5" height="3.4" fill="#2b2b33"/></svg>
<svg style="left:792.5px;top:712px;" width="19" height="17" viewBox="0 0 19 17"><rect x="1" y="0.9" width="16.8" height="14.8" rx="1.6" fill="#c3c9e2" stroke="#2b2b33" stroke-width="1.6"/><path d="M1 4.6H17.8M1 8.3H17.8M1 12H17.8M5 0.9V15.7" stroke="#2b2b33" stroke-width="1.5"/></svg>
<svg style="left:51.2px;top:797px;" width="16" height="17.6" viewBox="0 0 16 17.6"><path d="M8 0.8L15.2 4.6V12.6L8 16.8L0.8 12.6V4.6Z" fill="#e7e4f4" stroke="#a583d6" stroke-width="1.3" stroke-linejoin="round"/><path d="M8 16.8V8" stroke="#a583d6" stroke-width="1.5"/><path d="M0.8 4.6L8 0.8L15.2 4.6L8 8Z" fill="#e1dcf2" stroke="#7b3fbf" stroke-width="1.3" stroke-linejoin="round"/></svg>
<svg style="left:37px;top:873.4px;" width="8" height="5" viewBox="0 0 8 5"><path d="M0.7 0.7L4.6 5H0.7Z" fill="none" stroke="#1e1e1e" stroke-width="1.1"/></svg>
<svg style="left:50.3px;top:871.3px;" width="17" height="7" viewBox="0 0 17 7"><circle cx="8.2" cy="8.2" r="8" fill="#1565c0"/><circle cx="8.2" cy="5.6" r="1.2" fill="#fff"/></svg>
</body></html>
